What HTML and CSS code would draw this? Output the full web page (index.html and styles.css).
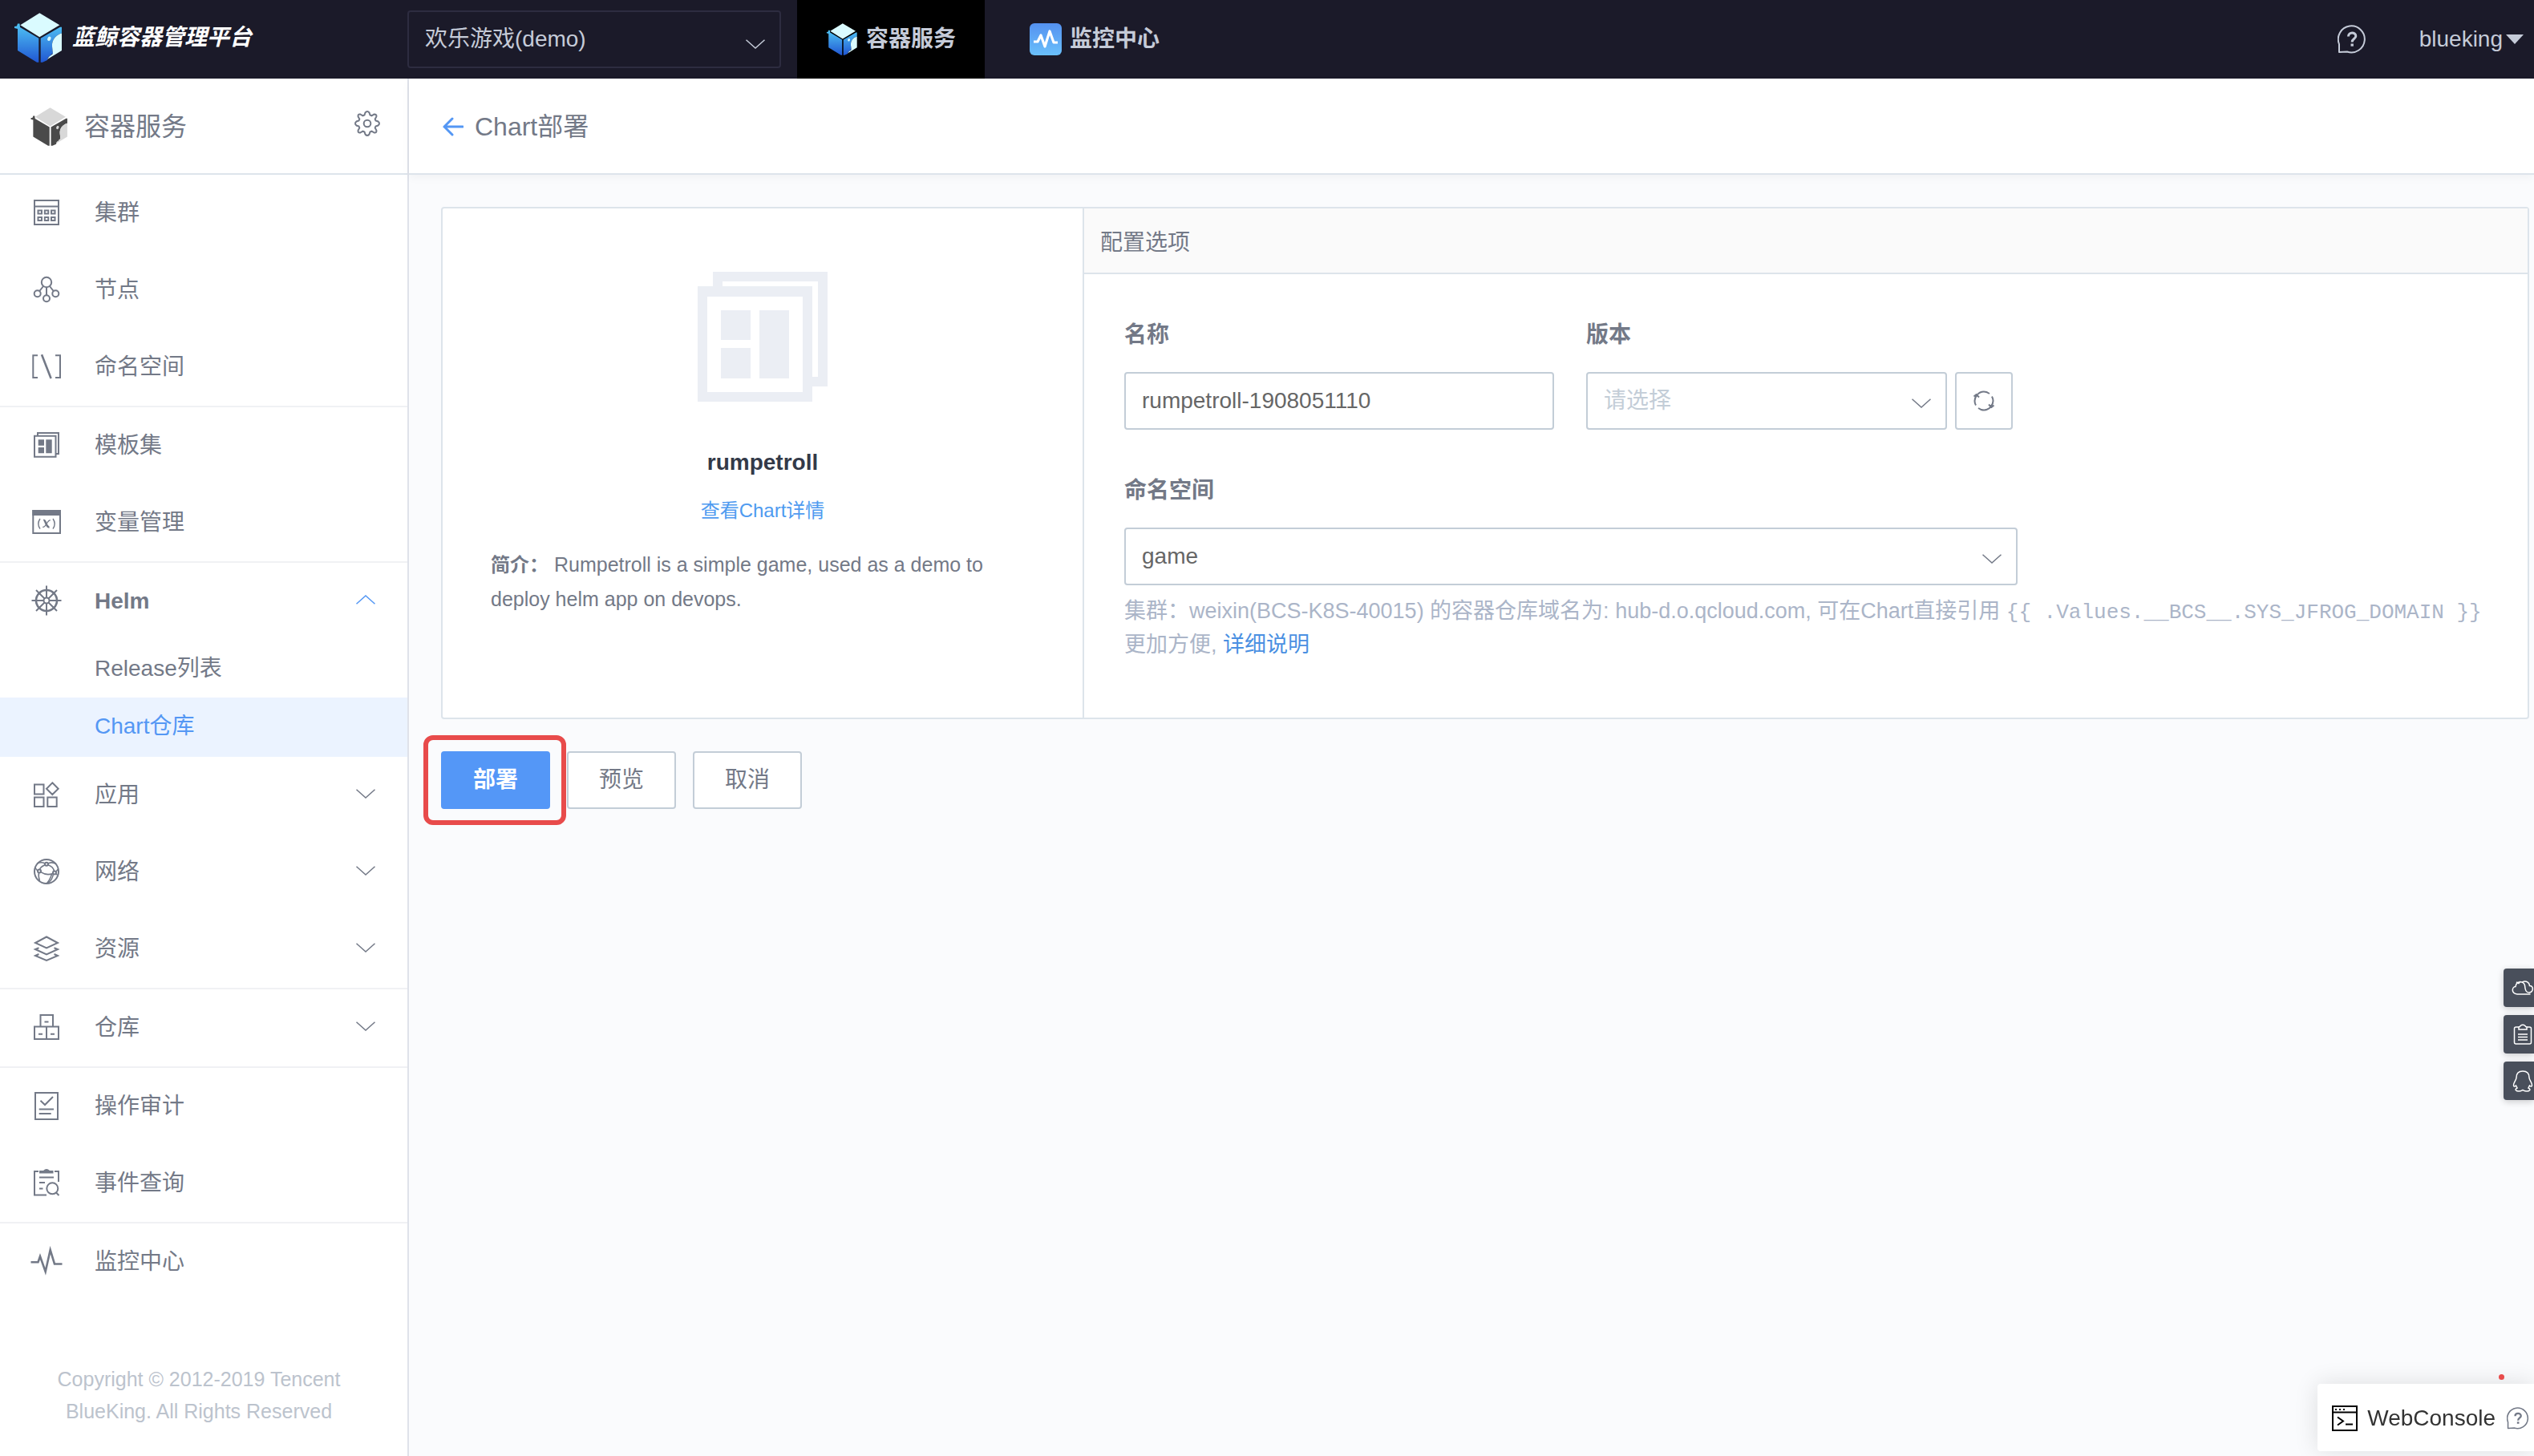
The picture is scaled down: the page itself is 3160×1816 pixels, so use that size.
FILE: index.html
```html
<!DOCTYPE html>
<html lang="zh-CN">
<head>
<meta charset="utf-8">
<meta name="viewport" content="width=device-width, initial-scale=1">
<title>蓝鲸容器管理平台</title>
<link rel="stylesheet" href="styles.css">
</head>
<body>
<svg class="defs" aria-hidden="true">
  <defs>
    <linearGradient id="cube-blue" gradientUnits="userSpaceOnUse" x1="0" y1="14" x2="0" y2="62">
      <stop offset="0" stop-color="#4fc3f4"/><stop offset="1" stop-color="#2056d2"/>
    </linearGradient>
    <linearGradient id="tile-blue" x1="0" y1="0" x2="0" y2="1">
      <stop offset="0" stop-color="#5491f0"/><stop offset="1" stop-color="#6ac0fb"/>
    </linearGradient>
  </defs>
  <symbol id="cube-body" viewBox="0 0 60 62">
    <path d="M4 20 L0 19 L0 17 L3 16.500 L4 13.500 L6.500 13.500 L7 18 L30.300 31.700 V61.700 L28 61.700 L4 47Z"/>
    <path d="M32.700 31.700 L57 17.700 H59 V25.500 C51 28 46.500 34 47 42 L48 51 L46 51.500 L45 54 L42 55.500 L41 59 L35 61.700 H32.700Z"/>
  </symbol>
  <symbol id="cube-light" viewBox="0 0 60 62">
    <path d="M31.300 .3 L56.300 15.300 L31.300 30.300 L7.300 15.300Z"/>
    <path d="M59 25.500 C51 28 46.500 34 47 42 L48 51 L43 55 L41 58 L59 47Z"/>
    <ellipse cx="43.300" cy="32.300" rx="2" ry="2.800" transform="rotate(25 43.300 32.300)"/>
  </symbol>
  <symbol id="down" viewBox="0 0 24 12"><path d="M.5 .7 L12 11 L23.500 .7"/></symbol>
  <symbol id="help" viewBox="0 0 36 36">
    <path d="M2 34 V24 A16.500 16.500 0 1 1 12 33.500 Z" fill="none" stroke="currentColor" stroke-width="2" stroke-linejoin="round"/>
    <path d="M13.500 14.500 C13.500 8.500 22.800 8.800 22.800 14 C22.800 17.500 18.200 17 18.200 21.500" fill="none" stroke="currentColor" stroke-width="3"/>
    <path d="M16.500 23.500 h3.400 v3.200 h-3.400z" fill="currentColor"/>
  </symbol>
</svg>

<header class="topbar">
  <a class="brand" href="#">
    <svg class="brand-logo" viewBox="0 0 60 62" aria-hidden="true"><use href="#cube-body" fill="url(#cube-blue)"/><use href="#cube-light" fill="#dafbff"/></svg>
    <span class="brand-name">蓝鲸容器管理平台</span>
  </a>
  <div class="select select-dark">
    <select aria-label="项目"><option>欢乐游戏(demo)</option></select>
    <svg class="chevron" aria-hidden="true"><use href="#down"/></svg>
  </div>
  <nav class="tabs">
    <a class="tab tab-active" href="#">
      <svg viewBox="0 0 60 62" aria-hidden="true"><use href="#cube-body" fill="url(#cube-blue)"/><use href="#cube-light" fill="#dafbff"/></svg>
      容器服务
    </a>
    <a class="tab tab-monitor" href="#">
      <svg viewBox="0 0 40 40" aria-hidden="true"><rect width="40" height="40" rx="6" fill="url(#tile-blue)"/><path d="M5 23 H10 L14 15 L19 29 L25 10 L30 24 H35" fill="none" stroke="#fff" stroke-width="3.200" stroke-linejoin="round"/></svg>
      监控中心
    </a>
  </nav>
  <div class="user">
    <a class="user-help" href="#" aria-label="帮助"><svg class="help-icon" aria-hidden="true"><use href="#help"/></svg></a>
    <button class="user-name" type="button">blueking<svg viewBox="0 0 22 12" aria-hidden="true"><path d="M0 0 H22 L11 12Z"/></svg></button>
  </div>
</header>

<div class="layout">
  <aside class="sidebar">
    <div class="side-title">
      <svg class="side-logo" viewBox="0 0 60 62" aria-hidden="true"><use href="#cube-body" fill="#4a4a4a"/><use href="#cube-light" fill="#d8d8d8"/></svg>
      <h2>容器服务</h2>
      <button class="gear" type="button" aria-label="设置">
        <svg viewBox="0 0 32 32" aria-hidden="true"><path d="M13.500 2.500 Q16 -.5 18.500 2.500 L19.500 5.500 L21.500 6.300 L24.500 4.600 Q28 4.500 27.400 7.500 L25.700 10.500 L26.500 12.500 L29.500 13.500 Q32.500 16 29.500 18.500 L26.500 19.500 L25.700 21.500 L27.400 24.500 Q28 28 24.500 27.400 L21.500 25.700 L19.500 26.500 L18.500 29.500 Q16 32.500 13.500 29.500 L12.500 26.500 L10.500 25.700 L7.500 27.400 Q4 28 4.600 24.500 L6.300 21.500 L5.500 19.500 L2.500 18.500 Q-.5 16 2.500 13.500 L5.500 12.500 L6.300 10.500 L4.600 7.500 Q4 4 7.500 4.600 L10.500 6.300 L12.500 5.500Z"/><circle cx="16" cy="16" r="4.300"/></svg>
      </button>
    </div>
    <nav>
      <ul class="menu">
        <li><a href="#"><svg class="icon" viewBox="0 0 40 40"><path d="M5 4 H35 V34 H5Z M5 11.500 H35"/><path d="M9.500 16.500 h4.500 v4 h-4.500z M17.800 16.500 h4.500 v4 h-4.500z M26 16.500 h4.500 v4 h-4.500z M9.500 25 h4.500 v4 h-4.500z M17.800 25 h4.500 v4 h-4.500z M26 25 h4.500 v4 h-4.500z"/></svg>集群</a></li>
        <li><a href="#"><svg class="icon" viewBox="0 0 40 40"><circle cx="20" cy="10" r="6.200"/><circle cx="8.700" cy="24.300" r="4"/><circle cx="31.300" cy="24.300" r="4"/><circle cx="20" cy="30.300" r="4"/><path d="M16 15 L11.300 21 M24 15 L28.700 21 M20 16 V26"/></svg>节点</a></li>
        <li><a href="#"><svg class="icon" viewBox="0 0 40 40"><path d="M9 5.300 H3.300 V33 H9 M31 5.300 H37 V33 H31"/><path d="M14 4.300 L25.600 34" stroke-width="2.600"/></svg>命名空间</a></li>
      </ul>
      <ul class="menu">
        <li><a href="#"><svg class="icon" viewBox="0 0 40 40"><path d="M5 7.700 H31.500 V33.700 H5Z M9 7 V4 H35 V30 H32"/><path class="solid" d="M9.700 12.300 H17 V19.700 H9.700Z M9.700 22 H17 V29.300 H9.700Z M19.300 12.300 H26.700 V29.300 H19.300Z"/></svg>模板集</a></li>
        <li><a href="#"><svg class="icon" viewBox="0 0 40 40"><path d="M3.300 5 H37 V33 H3.300Z"/><path class="solid" d="M2.300 4 H38 V11 H2.300Z"/><path d="M12 15 Q7.500 21.300 12 27.600 M28 15 Q32.500 21.300 28 27.600" stroke-width="1.400"/><path d="M16.300 17 C19.500 16 19 26 23.500 25.300" stroke-width="2.600"/><path d="M24.800 17 C21 16 19.500 26.500 15.200 25.300" stroke-width="1.300"/></svg>变量管理</a></li>
      </ul>
      <ul class="menu">
        <li>
          <a class="menu-open" href="#"><svg class="icon" viewBox="0 0 40 40"><circle cx="20" cy="19" r="13" stroke-width="2.600"/><circle cx="20" cy="19" r="3.500"/><path d="M20 .5 V15.500 M20 22.500 V37.500 M1.500 19 H16.500 M23.500 19 H38.500 M7 6 L17.500 16.500 M22.500 21.500 L33 32 M33 6 L22.500 16.500 M17.500 21.500 L7 32"/></svg>Helm<svg class="chevron chevron-up" aria-hidden="true"><use href="#down"/></svg></a>
          <ul class="submenu">
            <li><a href="#">Release列表</a></li>
            <li><a class="current" href="#">Chart仓库</a></li>
          </ul>
        </li>
        <li><a href="#"><svg class="icon" viewBox="0 0 40 40"><path d="M5 6.500 H16.500 V18.500 H5Z M5 22.500 H16.500 V34 H5Z M21.300 22.500 H32.700 V34 H21.300Z M27.300 4.300 L34.700 11.700 L27.300 19 L20 11.700Z"/></svg>应用<svg class="chevron" aria-hidden="true"><use href="#down"/></svg></a></li>
        <li><a href="#"><svg class="icon" viewBox="0 0 40 40"><circle cx="20" cy="19" r="15"/><circle cx="20" cy="9.700" r="2"/><circle cx="11" cy="18.500" r="2"/><circle cx="30" cy="20.500" r="2"/><path d="M8 9 Q14 6.500 18 9 M22 9 Q27 6.500 32 9.500 M18.200 10.700 Q12.500 13 11.500 16.500 M21.800 10.700 Q28.500 13 29.500 18.500 M12.800 19.700 Q20 24.500 28 21.500 M6 14 Q7.500 17.500 9 18 M10.500 20.500 Q9.500 25 11.500 31 M28.500 22 Q27.500 29 22 33.500 M26.500 22.500 Q24 30 20.500 33.500 M31.500 19.500 L34.500 16 M31.500 22 L33.500 23" stroke-width="1.600"/></svg>网络<svg class="chevron" aria-hidden="true"><use href="#down"/></svg></a></li>
        <li><a href="#"><svg class="icon" viewBox="0 0 40 40"><path d="M20 4.500 L34 12 L20 18.500 L6 12Z M10.500 18.300 L6 20 L20 26.500 L34 20 L29.500 18.300 M10.500 26 L6 28 L20 34 L34 28 L29.500 26"/></svg>资源<svg class="chevron" aria-hidden="true"><use href="#down"/></svg></a></li>
      </ul>
      <ul class="menu">
        <li><a href="#"><svg class="icon" viewBox="0 0 40 40"><path d="M12.500 18.500 V4 H28 V18.500 M5 18.500 H35 V34 H5Z M20 18.500 V34 M17.500 12.400 H22.500 M10 27.700 H15 M25 27.700 H30"/></svg>仓库<svg class="chevron" aria-hidden="true"><use href="#down"/></svg></a></li>
      </ul>
      <ul class="menu">
        <li><a href="#"><svg class="icon" viewBox="0 0 40 40"><path d="M6 3 H34 V36 H6Z M12.500 12.800 L18 18 L28 8 M10.700 23.400 H29 M10.700 29 H25.700"/></svg>操作审计</a></li>
        <li><a href="#"><svg class="icon" viewBox="0 0 40 40"><path d="M10 5 H5 V34.500 H20 M30 5 H35 V18 M11 12.600 H29 M11 19 H18 M11 26.600 H15.500"/><circle cx="27.300" cy="26.300" r="7"/><path d="M32 31.500 L35.500 35"/><path class="solid" d="M11 7.500 V4 H16 Q20 0 24 4 H28.500 V7.500Z"/></svg>事件查询</a></li>
      </ul>
      <ul class="menu">
        <li><a href="#"><svg class="icon" viewBox="0 0 40 40"><path d="M.5 20.200 H9.500 L12 13 L18.700 32 L24.700 5 L30 22.500 H39.500" stroke-width="2.600"/></svg>监控中心</a></li>
      </ul>
    </nav>
    <p class="copyright">Copyright © 2012-2019 Tencent<br>BlueKing. All Rights Reserved</p>
  </aside>

  <main class="main">
    <div class="page-head">
      <a class="back" href="#" aria-label="返回"><svg viewBox="0 0 26 24" aria-hidden="true"><path d="M25 12 H2 M12 2 L2 12 L12 22"/></svg></a>
      <h1>Chart部署</h1>
    </div>
    <form class="content">
      <div class="card">
        <section class="summary">
          <svg class="chart-icon" viewBox="0 0 162 162" aria-hidden="true"><path fill-rule="evenodd" d="M19 0 H162 V143 H143 V131 H150 V12 H31 V18 H19Z M0 18 H143 V162 H0Z M12 31 V150 H131 V31Z"/><path d="M29 48 H66 V85 H29Z M29 95 H66 V133 H29Z M77 48 H114 V133 H77Z"/></svg>
          <h3>rumpetroll</h3>
          <a class="detail-link" href="#">查看Chart详情</a>
          <p><strong>简介：</strong> Rumpetroll is a simple game, used as a demo to deploy helm app on devops.</p>
        </section>
        <section class="config">
          <h2>配置选项</h2>
          <div class="config-body">
            <div class="row">
              <div class="field name-field">
                <label for="name">名称</label>
                <input id="name" type="text" value="rumpetroll-1908051110">
              </div>
              <div class="field">
                <label for="version">版本</label>
                <div class="version-controls">
                  <div class="select version-select">
                    <select id="version" class="placeholder"><option>请选择</option></select>
                    <svg class="chevron" aria-hidden="true"><use href="#down"/></svg>
                  </div>
                  <button class="refresh" type="button" aria-label="刷新">
                    <svg viewBox="0 0 28 26" aria-hidden="true"><path d="M4 18.500 A11.500 11.500 0 0 1 18 2.300 L21 4 M24 7.500 A11.500 11.500 0 0 1 10 23.700 L7 22 M1.500 7.500 L4.500 5 L8 8.500 M20 17.500 L23.500 21 L26.500 18.500"/></svg>
                  </button>
                </div>
              </div>
            </div>
            <div class="field">
              <label for="namespace">命名空间</label>
              <div class="select namespace-select">
                <select id="namespace"><option>game</option></select>
                <svg class="chevron" aria-hidden="true"><use href="#down"/></svg>
              </div>
            </div>
            <p class="hint">集群：weixin(BCS-K8S-40015) 的容器仓库域名为: hub-d.o.qcloud.com, 可在Chart直接引用 <code>{{ .Values.__BCS__.SYS_JFROG_DOMAIN }}</code> 更加方便, <a href="#">详细说明</a></p>
          </div>
        </section>
      </div>
      <div class="actions">
        <span class="highlight"><button class="btn btn-primary" type="button">部署</button></span>
        <button class="btn" type="button">预览</button>
        <button class="btn" type="button">取消</button>
      </div>
    </form>
  </main>
</div>

<div class="side-tools">
  <button type="button" aria-label="云服务"><svg viewBox="0 0 28 28"><path d="M7 22 C-1 21 .5 13 5 12.500 C6 5 15 5 16.500 11 C17 17 18 20 22 20 C28 19 27.500 11 22.500 11.500 C22 6 15.500 4.500 13 7.500 M7 22 H23.500 M6 7 L9 8.500 L11 6"/></svg></button>
  <button type="button" aria-label="文档"><svg viewBox="0 0 28 28"><rect x="3.500" y="5" width="21" height="21" rx="2"/><path d="M9 5 V8 H19 V5 Q17.500 5 17 3.500 Q14 1 11 3.500 Q10.500 5 9 5Z" fill="#494f5b"/><path d="M8 14 H20 M8 17.500 H20 M8 21 H20"/></svg></button>
  <button type="button" aria-label="客服"><svg viewBox="0 0 28 28"><path d="M14 2 C8 2 6 6 6 10 C6 13 2.500 16 2.500 19.500 C2.500 21.500 4 21.500 5.500 20 L7 23 C3 25 6 27 9 27 C12 27 13 26 14 25.500 C15 26 16 27 19 27 C22 27 25 25 21 23 L22.500 20 C24 21.500 25.500 21.500 25.500 19.500 C25.500 16 22 13 22 10 C22 6 20 2 14 2Z"/></svg></button>
</div>

<div class="console">
  <a class="console-link" href="#">
    <svg viewBox="0 0 32 32" aria-hidden="true"><path d="M1 1 H31 V31 H1Z M1 8.500 H31 M7 14.500 L14 19.500 L7 24.500 M17 23.500 H26"/><path d="M4 5 H6 M9 5 H11 M14 5 H16"/></svg>
    WebConsole
  </a>
  <a class="console-help" href="#" aria-label="帮助"><svg class="help-icon" aria-hidden="true"><use href="#help"/></svg></a>
  <i class="dot"></i>
</div>
</body>
</html>
```
FILE: styles.css
```css
* { box-sizing: border-box; }

body {
  margin: 0;
  min-height: 100vh;
  display: flex;
  flex-direction: column;
  background: #fafbfd;
  color: #737987;
  font: 28px/40px "Liberation Sans", "Noto Sans CJK SC", sans-serif;
}

a { color: inherit; text-decoration: none; }
h1, h2, h3, p, ul { margin: 0; padding: 0; }
ul { list-style: none; }
svg { display: block; flex: none; }
button, input, select { font: inherit; color: inherit; margin: 0; padding: 0; border: 0; background: none; }
.defs { position: absolute; width: 0; height: 0; }

/* Drop-downs */
.select {
  display: grid;
  align-items: center;
  height: 72px;
  background: #fff;
  border: 2px solid #c3cdd7;
  border-radius: 4px;
  color: #666;
}
.select select {
  grid-area: 1 / 1;
  width: 100%;
  height: 68px;
  padding: 0 60px 0 20px;
  appearance: none;
  outline: 0;
}
.select .chevron {
  grid-area: 1 / 1;
  justify-self: end;
  margin: 6px 18px 0 0;
  pointer-events: none;
}
.select .placeholder { color: #c3cdd7; }
.chevron {
  width: 24px;
  height: 12px;
  fill: none;
  stroke: #737987;
  stroke-width: 1.5px;
}
.chevron-up { stroke: #5497f4; transform: rotate(180deg); }
.help-icon { width: 36px; height: 36px; }

/* Top bar */
.topbar {
  display: flex;
  align-items: center;
  height: 98px;
  background: #1b1a29;
  color: #c5cbd8;
}
.brand {
  display: flex;
  align-items: center;
  gap: 12px;
  width: 508px;
  padding: 0 0 4px 18px;
}
.brand-logo { width: 60px; height: 62px; }
.brand-name { color: #fff; font-weight: 700; font-style: italic; }
.select-dark {
  width: 466px;
  margin-right: 20px;
  background: none;
  border-color: #2d2c40;
  color: #c5cbd8;
}
.select-dark .chevron { margin-top: 12px; stroke: #c5cbd8; }
.tabs { display: flex; align-self: stretch; font-weight: 700; }
.tab { display: flex; align-items: center; gap: 10px; padding: 0 36px; }
.tab svg { width: 40px; height: 40px; }
.tab-active { background: #000; }
.tab-monitor { padding-left: 56px; }
.user { display: flex; align-items: center; gap: 66px; margin-left: auto; padding-right: 13px; }
.user-name { display: flex; align-items: center; gap: 4px; }
.user-name svg { width: 22px; height: 12px; fill: currentColor; }

/* Sidebar */
.layout { display: flex; flex: 1; }
.sidebar {
  display: flex;
  flex-direction: column;
  flex: none;
  width: 510px;
  background: #fff;
  border-right: 2px solid #dfe2ea;
}
.side-title {
  display: flex;
  align-items: center;
  height: 120px;
  padding: 2px 34px 0 38px;
  border-bottom: 2px solid #dde4eb;
}
.side-logo { width: 47px; height: 48px; margin-right: 20px; }
.side-title h2 { font-size: 32px; font-weight: 400; }
.gear { margin: 0 0 8px auto; }
.gear svg { width: 32px; height: 32px; fill: none; stroke: currentColor; stroke-width: 2px; }
.menu + .menu { border-top: 2px solid #f0f1f4; }
.menu > li > a {
  display: flex;
  align-items: center;
  height: 96px;
  padding: 0 40px 0 38px;
}
.icon {
  width: 40px;
  height: 40px;
  margin-right: 40px;
  fill: none;
  stroke: currentColor;
  stroke-width: 2px;
}
.icon .solid { fill: currentColor; stroke: none; }
.menu .chevron { margin: 0 0 4px auto; }
.menu > li > .menu-open { font-weight: 700; }
.submenu a { display: block; padding-left: 118px; line-height: 72px; }
.submenu .current { padding-bottom: 2px; background: #ebf3ff; color: #5497f4; }
.copyright {
  margin-top: auto;
  padding: 40px 16px 36px 4px;
  color: #bcc3cd;
  font-size: 25px;
  text-align: center;
}

/* Main column */
.main { flex: 1; min-width: 0; }
.page-head {
  display: flex;
  align-items: center;
  gap: 14px;
  height: 120px;
  padding: 2px 42px 0;
  background: #fff;
  border-bottom: 2px solid #dde4eb;
  box-shadow: 0 4px 10px rgba(0, 0, 0, .04);
}
.page-head h1 { font-size: 32px; font-weight: 400; }
.back svg { width: 26px; height: 24px; fill: none; stroke: #5497f4; stroke-width: 3px; stroke-linecap: round; }
.content { padding: 40px 6px 40px 40px; }
.card {
  display: flex;
  background: #fff;
  border: 2px solid #dde4eb;
  border-radius: 4px;
}
.summary {
  display: flex;
  flex-direction: column;
  align-items: center;
  flex: none;
  width: 800px;
  padding: 79px 60px 127px;
  border-right: 2px solid #dde4eb;
}
.chart-icon { width: 162px; height: 162px; fill: #ebeef4; }
.summary h3 { margin-top: 56px; font-size: 28px; color: #333948; }
.detail-link { margin-top: 20px; font-size: 24px; color: #4f9bf0; }
.summary p { align-self: stretch; margin-top: 26px; font-size: 25px; line-height: 42px; }
.summary strong { font-size: 24px; }
.config { flex: 1; min-width: 0; }
.config h2 {
  height: 82px;
  padding: 2px 20px;
  background: #fafafa;
  border-bottom: 2px solid #dde4eb;
  font-size: 28px;
  font-weight: 400;
  line-height: 82px;
}
.config-body { padding: 56px 50px 40px; }
.row { display: flex; gap: 40px; margin-bottom: 56px; }
.field { display: flex; flex-direction: column; gap: 26px; }
.field label { font-weight: 700; }
.field input {
  height: 72px;
  padding: 0 20px;
  background: #fff;
  border: 2px solid #c3cdd7;
  border-radius: 4px;
  color: #666;
  outline: 0;
}
.name-field { width: 536px; }
.version-controls { display: flex; gap: 10px; }
.version-select { width: 450px; }
.namespace-select { width: 1114px; }
.refresh {
  display: grid;
  place-items: center;
  width: 72px;
  height: 72px;
  border: 2px solid #c3cdd7;
  border-radius: 4px;
}
.refresh svg { width: 28px; height: 26px; fill: none; stroke: #737987; stroke-width: 2px; }
.hint { margin-top: 12px; font-size: 27px; color: #abb5c8; }
.hint code { font-family: "Liberation Mono", monospace; font-size: 26px; white-space: nowrap; }
.hint a { color: #4a90e2; }

/* Form actions */
.actions { display: flex; gap: 21px; margin-top: 40px; }
.btn {
  width: 136px;
  height: 72px;
  background: #fff;
  border: 2px solid #c3cdd7;
  border-radius: 4px;
}
.btn-primary { background: #5497f7; border-color: #5497f7; color: #fff; font-weight: 700; }
.highlight { position: relative; height: 72px; }
.highlight::after {
  content: "";
  position: absolute;
  inset: -20px -20px -20px -22px;
  border: 6px solid #e84b4b;
  border-radius: 12px;
  pointer-events: none;
}

/* Floating tools */
.side-tools {
  position: fixed;
  right: 0;
  bottom: 444px;
  display: flex;
  flex-direction: column;
  gap: 10px;
}
.side-tools button {
  width: 38px;
  height: 48px;
  padding-left: 10px;
  background: #494f5b;
  border-radius: 4px 0 0 4px;
  box-shadow: 0 2px 8px rgba(0, 0, 0, .2);
}
.side-tools svg { width: 28px; height: 28px; fill: none; stroke: #fff; stroke-width: 1.5px; }
.console {
  position: fixed;
  right: 0;
  bottom: 6px;
  display: flex;
  align-items: center;
  gap: 14px;
  height: 84px;
  padding: 2px 6px 0 18px;
  background: #fff;
  border-radius: 4px 0 0 4px;
  box-shadow: 0 0 30px rgba(0, 0, 0, .12);
}
.console-link { display: flex; align-items: center; gap: 12px; color: #333; }
.console-link svg { width: 32px; height: 32px; fill: none; stroke: #000; stroke-width: 2px; }
.console-help .help-icon { width: 28px; height: 28px; }
.dot {
  position: absolute;
  top: -12px;
  right: 37px;
  width: 7px;
  height: 7px;
  border-radius: 50%;
  background: #e84b4b;
}
```
